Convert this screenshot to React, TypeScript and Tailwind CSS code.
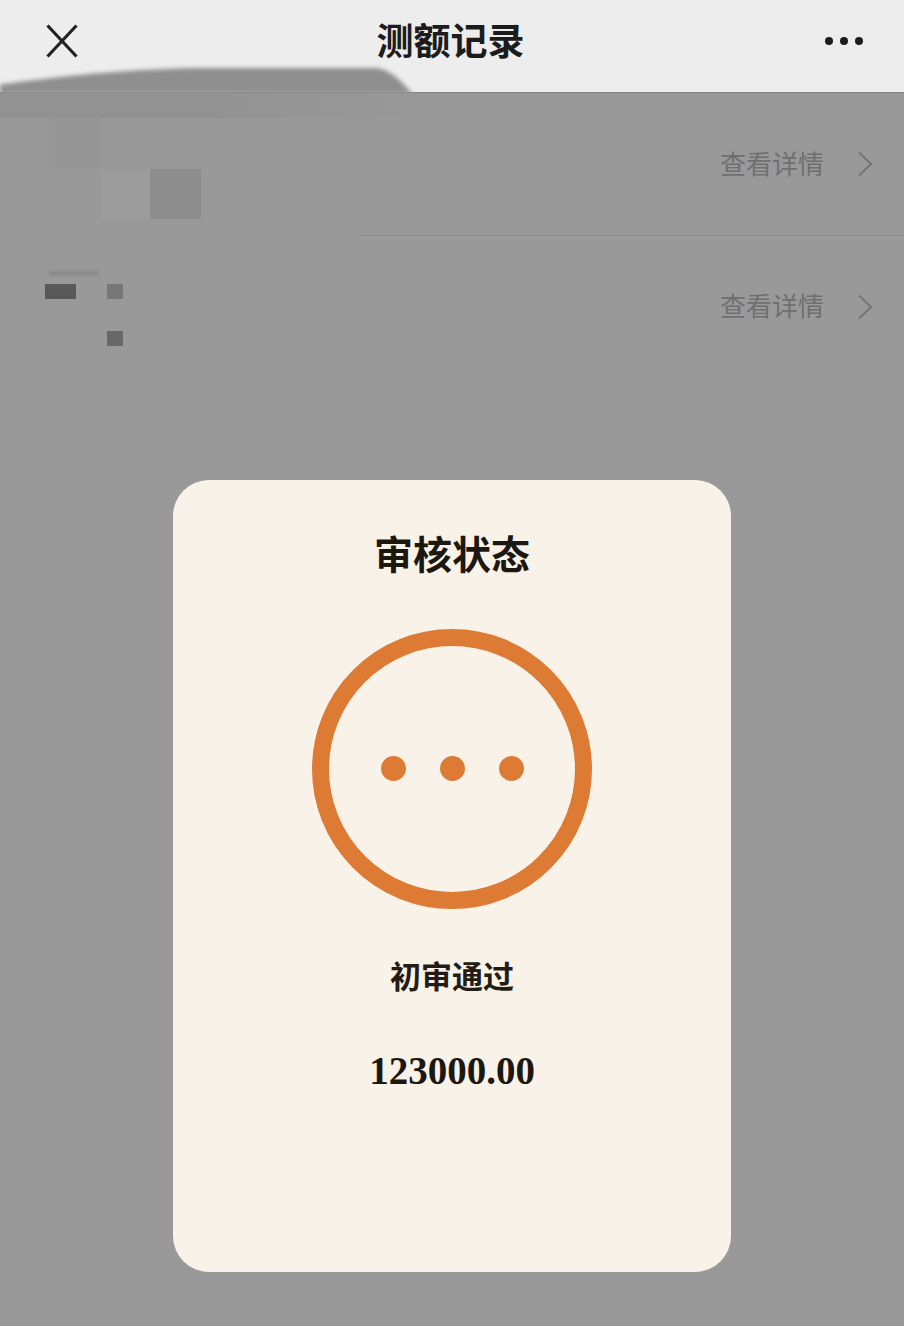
import React from 'react'

const cjk = "font-['Noto_Sans_CJK_SC','Liberation_Sans',sans-serif]"

function DetailRow({ className, children }: { className: string; children: React.ReactNode }) {
  return (
    <div className={`flex items-start justify-between pr-[31px] ${className}`}>
      <div>{children}</div>
      <div className="h-full flex items-center pb-[3px]">
        <span className={`${cjk} text-[26px] leading-none text-[#6f6f6f]`}>查看详情</span>
        <svg width="16" height="26" viewBox="0 0 16 26" fill="none" className="ml-[33px] mt-[3px]">
          <path d="M2 1.5L14 13L2 24.5" stroke="#757575" strokeWidth="2" />
        </svg>
      </div>
    </div>
  )
}

// pixelated patches that hide the account details in the screenshot
function MosaicTop() {
  return (
    <div className="flex flex-col gap-[1px] pt-[25px] pl-[49px]">
      <div className="w-[50px] h-[50px] bg-[#959595]" />
      <div className="flex items-start">
        <div className="w-[50px] h-[47px] bg-[#989898]" />
        <div className="ml-[3px] mt-[1px] w-[48px] h-[48px] bg-[#9c9c9c]" />
        <div className="w-[51px] h-[50px] bg-[#8d8d8d]" />
      </div>
    </div>
  )
}

function MosaicBottom() {
  return (
    <div className="flex flex-col items-start pt-[35px] pl-[45px]">
      <div className="ml-[4px] w-[50px] h-[5px] bg-[#8b8b8b] blur-[1px]" />
      <div className="mt-[8px] flex gap-[31px]">
        <div className="w-[31px] h-[15px] bg-[#595959]" />
        <div className="w-[16px] h-[15px] bg-[#777777]" />
      </div>
      <div className="mt-[32px] ml-[62px] w-[16px] h-[15px] bg-[#686868]" />
    </div>
  )
}

export default function App() {
  return (
    <div className="relative w-[904px] h-[1326px] overflow-hidden bg-[#999999]">
      <div className="h-[93px] bg-[#ededed] border-b border-[#838383] flex items-center justify-between pl-[46px] pr-[41px] pb-[11px]">
        <svg width="32" height="34" viewBox="0 0 32 34" fill="none">
          <path d="M1.5 1.5L30.5 32.5M30.5 1.5L1.5 32.5" stroke="#222222" strokeWidth="3.2" />
        </svg>
        <h1 className={`${cjk} mr-[2px] mb-[3px] text-[37px] leading-[46px] font-bold text-[#1c1c1c]`}>测额记录</h1>
        <div className="flex gap-[7px]">
          <span className="w-[8px] h-[8px] rounded-full bg-[#1c1c1c]" />
          <span className="w-[8px] h-[8px] rounded-full bg-[#1c1c1c]" />
          <span className="w-[8px] h-[8px] rounded-full bg-[#1c1c1c]" />
        </div>
      </div>

      <DetailRow className="h-[142px]">
        <MosaicTop />
      </DetailRow>
      <div className="ml-auto w-[544px] h-px bg-[#8e8e8e]" />
      <DetailRow className="h-[141px]">
        <MosaicBottom />
      </DetailRow>

      {/* smudge over the top left of the list */}
      <svg width="430" height="62" viewBox="0 0 430 62" className="absolute left-0 top-[62px] blur-[2px]">
        <path d="M-10 24C60 14 120 8 190 6L378 6C392 9 402 20 412 31L412 32L-10 32Z" fill="#8f8f8f" />
      </svg>
      <div className="absolute left-0 top-[93px] w-[430px] h-[25px] bg-gradient-to-r from-[#929292] via-[#929292] to-[#999999]" />

      {/* dialog */}
      <div className="absolute inset-0 flex justify-center items-start pt-[480px]">
        <div className="w-[558px] h-[792px] rounded-[36px] bg-[#f9f2e9] flex flex-col items-center">
          <h2 className={`${cjk} mt-[47px] text-[39px] leading-[50px] font-bold text-[#1c170f]`}>审核状态</h2>
          <div className="mt-[52px] w-[280px] h-[280px] rounded-full border-[17px] border-[#dd7a34] flex items-center justify-center gap-[34px] pb-[2px]">
            <span className="w-[25px] h-[25px] rounded-full bg-[#dd7a34]" />
            <span className="w-[25px] h-[25px] rounded-full bg-[#dd7a34]" />
            <span className="w-[25px] h-[25px] rounded-full bg-[#dd7a34]" />
          </div>
          <p className={`${cjk} mt-[46px] text-[31px] leading-[40px] font-bold text-[#221c14]`}>初审通过</p>
          <p className="mt-[51px] font-['Liberation_Serif',serif] text-[39px] leading-[50px] font-bold text-[#1c170f]">123000.00</p>
        </div>
      </div>
    </div>
  )
}
